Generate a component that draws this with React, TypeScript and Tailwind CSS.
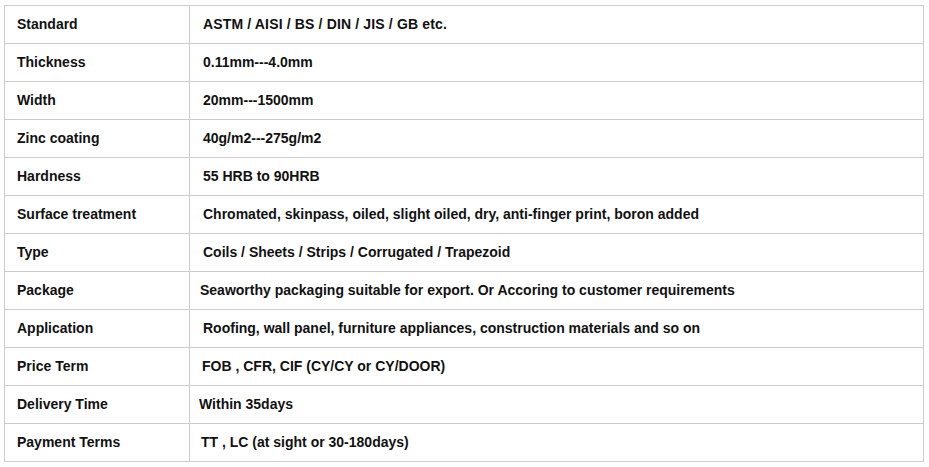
import React from "react";

const rows: [string, string, string][] = [
  ["Standard", "ASTM / AISI / BS / DIN / JIS / GB etc.", "pl-[13px] tracking-[0.15px]"],
  ["Thickness", "0.11mm---4.0mm", "pl-[13px]"],
  ["Width", "20mm---1500mm", "pl-[13px]"],
  ["Zinc coating", "40g/m2---275g/m2", "pl-[13px]"],
  ["Hardness", "55 HRB to 90HRB", "pl-[13px]"],
  ["Surface treatment", "Chromated, skinpass, oiled, slight oiled, dry, anti-finger print, boron added", "pl-[13px]"],
  ["Type", "Coils / Sheets / Strips / Corrugated / Trapezoid", "pl-[13px]"],
  ["Package", "Seaworthy packaging suitable for export. Or Accoring to customer requirements", "pl-[10px]"],
  ["Application", "Roofing, wall panel, furniture appliances, construction materials and so on", "pl-[13px]"],
  ["Price Term", "FOB , CFR, CIF (CY/CY or CY/DOOR)", "pl-[12px]"],
  ["Delivery Time", "Within 35days", "pl-[9px]"],
  ["Payment Terms", "TT , LC (at sight or 30-180days)", "pl-[11px]"],
];

export default function App() {
  return (
    <div className="w-[929px] h-[467px] bg-white pt-[5px] pl-[4px]" style={{ fontFamily: '"Liberation Sans", Arial, sans-serif' }}>
      <div className="w-[920px] border-t border-l border-[#cccccc]">
        {rows.map(([k, v, pad]) => (
          <div key={k} className="flex h-[38px] border-b border-[#cccccc] text-[14px] font-bold text-[#111111]">
            <div className="w-[185px] border-r border-[#cccccc] flex items-center pl-[12px]">{k}</div>
            <div className={`flex-1 border-r border-[#cccccc] flex items-center ${pad}`}>{v}</div>
          </div>
        ))}
      </div>
    </div>
  );
}
